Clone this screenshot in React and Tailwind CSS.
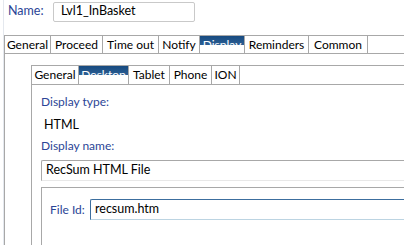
export default function App() {
  const font = { fontFamily: 'Lato, "Noto Sans", sans-serif' };
  const outerTabs = ["General", "Proceed", "Time out", "Notify", "Display", "Reminders", "Common"];
  const outerW = [47, 52, 56, 41, 45, 64, 59];
  const innerTabs = ["General", "Desktop", "Tablet", "Phone", "ION"];
  const innerW = [48, 50, 41, 42, 28];
  const blue = "bg-[linear-gradient(#174a80_0%,#2c5f94_52%,#ffffff_52%)]";
  return (
    <div className="w-[404px] h-[245px] overflow-hidden bg-white text-[12px] text-black" style={font}>
      <div className="pl-[3px] h-[300px]">
        <div className="h-full border-l border-[#e4e8ee] flex flex-col">
          {/* Name row */}
          <div className="shrink-0 flex items-center h-[21px] mt-[1px]">
            <div className="w-[49px] pl-[4px] text-[#2b4596] text-[12.5px]">Name:</div>
            <div className="w-[142px] h-[20px] border border-[#c9c9c9] rounded-[2px] flex items-center pl-[7px] text-[12.5px]">
              Lvl1_InBasket
            </div>
          </div>
          <div className="shrink-0 h-[13px]" />
          {/* outer tab strip */}
          <div className="shrink-0 flex h-[19px] border-t border-b border-[#a8a8a8]">
            {outerTabs.map((t, i) => {
              const sel = t === "Display";
              return (
                <div
                  key={t}
                  style={{ width: outerW[i] }}
                  className={
                    "shrink-0 h-full flex items-center justify-center leading-none border-r border-[#a8a8a8] " +
                    (i === 0 ? "border-l " : "") +
                    (sel ? blue + " text-white" : "")
                  }
                >
                  {t}
                </div>
              );
            })}
          </div>
          {/* outer panel */}
          <div className="shrink-0 flex-1 border-l border-[#a8a8a8] pl-[26px] pt-[11px]">
            <div className="flex flex-col">
              <div className="shrink-0 flex h-[20px] border-t border-b border-[#a8a8a8]">
                {innerTabs.map((t, i) => {
                  const sel = t === "Desktop";
                  return (
                    <div
                      key={t}
                      style={{ width: innerW[i] }}
                      className={
                        "shrink-0 h-full flex items-center justify-center leading-none border-r border-[#a8a8a8] " +
                        (i === 0 ? "border-l " : "") +
                        (sel ? blue + " text-white" : "")
                      }
                    >
                      {t}
                    </div>
                  );
                })}
              </div>
              <div className="shrink-0 border-l border-[#a8a8a8] pl-[9px] pt-[9px] pb-[40px]">
                <div className="text-[#2b4596] h-[16px] leading-[16px]">Display type:</div>
                <div className="pl-[3px] mt-[6px] h-[17px] leading-[17px] text-[12.5px]">HTML</div>
                <div className="text-[#2b4596] mt-[5px] h-[16px] leading-[16px]">Display name:</div>
                <div className="mt-[6px] h-[21px] border-t border-l border-[#a8a8a8] border-b-[#e8e8e8] border-b rounded-tl-[2px] flex items-center pl-[4px] text-[12.5px]">
                  RecSum HTML File
                </div>
                <div className="mt-[6px] border-t border-l border-[#a8a8a8] pl-[8px] pt-[11px] h-[80px]">
                  <div className="flex items-center">
                    <div className="w-[40px] text-[#2b4596]">File Id:</div>
                    <div className="flex-1 h-[21px] border-t border-l border-[#3c6e9e] border-b border-b-[#bcd4e2] rounded-tl-[2px] flex items-center pl-[4px] text-[12.5px]">
                      recsum.htm
                    </div>
                  </div>
                </div>
              </div>
            </div>
          </div>
        </div>
      </div>
    </div>
  );
}
